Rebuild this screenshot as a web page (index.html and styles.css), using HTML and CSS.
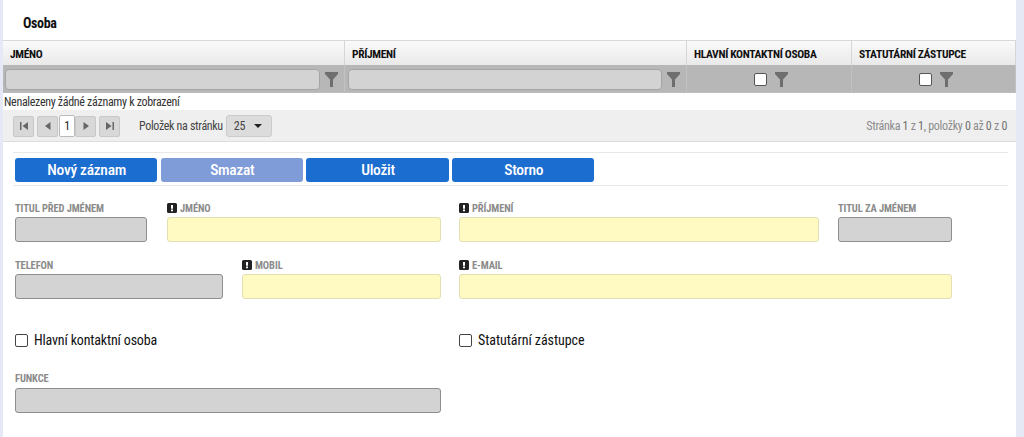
FILE: index.html
```html
<!DOCTYPE html>
<html lang="cs">
<head>
<meta charset="utf-8">
<title>Osoba</title>
<link rel="stylesheet" href="styles.css">
</head>
<body>
<svg class="defs" width="0" height="0" aria-hidden="true">
  <symbol id="funnel" viewBox="0 0 13 15"><path d="M0 0H13V2L8 7.5V15H5V7.5L0 2Z"/></symbol>
  <symbol id="warn" viewBox="0 0 10 10"><path fill-rule="evenodd" d="M1.5 0H8.5A1.5 1.5 0 0 1 10 1.5V8.500A1.500 1.500 0 0 1 8.500 10H1.500A1.500 1.500 0 0 1 0 8.500V1.500A1.500 1.500 0 0 1 1.500 0ZM4 2V5.700H6V2ZM4 6.500V8.300H6V6.500Z"/></symbol>
</svg>
<main class="page">
  <h1 class="title">Osoba</h1>
  <section class="grid">
    <div class="row head">
      <div class="cell c1">JMÉNO</div>
      <div class="cell c2">PŘÍJMENÍ</div>
      <div class="cell c3">HLAVNÍ KONTAKTNÍ OSOBA</div>
      <div class="cell c4">STATUTÁRNÍ ZÁSTUPCE</div>
    </div>
    <div class="row filter">
      <div class="fcell c1"><span class="finput"></span><svg class="funnel"><use href="#funnel"/></svg></div>
      <div class="fcell c2"><span class="finput"></span><svg class="funnel"><use href="#funnel"/></svg></div>
      <div class="fcell c3 center"><span class="fcheck"></span><svg class="funnel"><use href="#funnel"/></svg></div>
      <div class="fcell c4 center"><span class="fcheck"></span><svg class="funnel"><use href="#funnel"/></svg></div>
    </div>
    <div class="empty">Nenalezeny žádné záznamy k zobrazení</div>
    <div class="pager">
      <div class="nav">
        <span class="pbtn"><svg viewBox="0 0 8 8"><path d="M0 0H1.500V8H0ZM8 0V8L2.500 4Z"/></svg></span>
        <span class="pbtn gap"><svg viewBox="0 0 8 8"><path d="M6.500 0V8L1 4Z"/></svg></span>
        <span class="pnum">1</span>
        <span class="pbtn"><svg viewBox="0 0 8 8"><path d="M1.500 0V8L7 4Z"/></svg></span>
        <span class="pbtn gap"><svg viewBox="0 0 8 8"><path d="M8 0H6.500V8H8ZM0 0V8L5.500 4Z"/></svg></span>
      </div>
      <span class="plabel">Položek na stránku</span>
      <span class="psize">25<i class="caret"></i></span>
      <span class="pinfo">Stránka <b>1</b> z <b>1</b>, položky <b>0</b> až <b>0</b> z <b>0</b></span>
    </div>
  </section>
  <div class="toolbar">
    <button class="btn">Nový záznam</button>
    <button class="btn off">Smazat</button>
    <button class="btn">Uložit</button>
    <button class="btn">Storno</button>
  </div>
  <form class="form">
    <div class="frow r1">
      <div class="field"><label class="lab">TITUL PŘED JMÉNEM</label><span class="inp gray"></span></div>
      <div class="field"><label class="lab"><svg class="warn"><use href="#warn"/></svg>JMÉNO</label><span class="inp req"></span></div>
      <div class="field"><label class="lab"><svg class="warn"><use href="#warn"/></svg>PŘÍJMENÍ</label><span class="inp req"></span></div>
      <div class="field"><label class="lab">TITUL ZA JMÉNEM</label><span class="inp gray"></span></div>
    </div>
    <div class="frow r2">
      <div class="field"><label class="lab">TELEFON</label><span class="inp gray"></span></div>
      <div class="field"><label class="lab"><svg class="warn"><use href="#warn"/></svg>MOBIL</label><span class="inp req"></span></div>
      <div class="field"><label class="lab"><svg class="warn"><use href="#warn"/></svg>E-MAIL</label><span class="inp req"></span></div>
    </div>
    <div class="frow r3">
      <div class="chk"><span class="box"></span>Hlavní kontaktní osoba</div>
      <div class="chk chk-b"><span class="box"></span>Statutární zástupce</div>
    </div>
    <div class="frow r4">
      <div class="field"><label class="lab">FUNKCE</label><span class="inp gray"></span></div>
    </div>
  </form>
</main>
</body>
</html>
```
FILE: styles.css
```css
* { box-sizing: border-box; }
html, body { margin: 0; height: 437px; overflow: hidden; }
body { background: #e4e9f5; font-family: Roboto, "Liberation Sans", sans-serif; font-stretch: condensed; color: #111; }
.defs { position: absolute; }
.page { width: 1013px; height: 437px; margin-left: 3px; background: #fff; }
.title { margin: 0; height: 40px; padding: 14px 0 0 20px; font-size: 14px; line-height: 18px; font-weight: 700; letter-spacing: -0.35px; }
.row { display: grid; grid-template-columns: 342px 342px 165px 164px; }
.head { height: 25px; background: linear-gradient(#fafafa, #e9e9e9); border-top: 1px solid #d8d8d8; }
.cell { padding: 6px 0 0 7px; font-size: 11.500px; line-height: 14px; font-weight: 700; letter-spacing: -0.33px; border-right: 1px solid #d6d6d6; white-space: nowrap; }
.filter { height: 28px; background: #b7b7b7; border-bottom: 1px solid #bdbdbd; }
.fcell { display: flex; align-items: center; padding: 1px 6px 0 2px; border-right: 1px solid #c2c2c2; }
.c2 .finput { margin-left: 1px; }
.center { justify-content: center; padding: 1px 0 0 4px; }
.finput { flex: 1; height: 21px; background: #d3d3d3; border: 1px solid #a5a5a5; border-radius: 4px; }
.funnel { width: 13px; height: 15px; margin-left: 5px; fill: #6e6e6e; }
.fcheck { width: 13px; height: 13px; background: #fff; border: 1px solid #555; border-radius: 2px; margin-right: 3px; }
.empty { height: 17px; padding: 1px 0 0 1px; font-size: 12px; line-height: 16px; color: #333; letter-spacing: -0.32px; }
.pager { display: flex; align-items: center; height: 32px; padding: 1px 9px 0 10px; background: #efefef; border-bottom: 1px solid #ddd; font-size: 12px; color: #444; letter-spacing: -0.33px; }
.nav { display: flex; align-items: center; }
.pbtn { display: flex; align-items: center; justify-content: center; width: 21px; height: 21px; background: #d8d8d8; border: 1px solid #c8c8c8; border-radius: 2px; }
.pbtn svg { width: 8px; height: 8px; fill: #666; }
.gap { margin-left: 3px; }
.pnum { width: 16px; height: 22px; margin: 0; background: #fff; border: 1px solid #bbb; border-radius: 2px; text-align: center; font-size: 12px; line-height: 20px; color: #222; }
.nav .gap + .pnum { margin-left: 1px; }
.plabel { margin-left: 19px; }
.psize { position: relative; width: 46px; height: 22px; margin-left: 3px; padding-left: 7px; line-height: 21px; background: #dcdcdc; border: 1px solid #cbcbcb; border-radius: 3px; }
.caret { position: absolute; right: 9px; top: 8px; border: 4px solid transparent; border-top: 4px solid #222; border-bottom: 0; }
.pinfo { margin-left: auto; color: #8c8c8c; letter-spacing: -0.3px; }
.pinfo b { font-weight: 400; color: #6f6f6f; }
.toolbar { display: flex; gap: 3.400px; height: 34px; margin: 10px 8px 0 10px; padding: 5px 0 0 2px; border-top: 1px solid #e8e8e8; border-bottom: 1px solid #e8e8e8; }
.btn { width: 142.300px; height: 24px; padding: 0 0 0 1px; background: #1c6dd0; border: 0; border-radius: 3px; color: #fff; font: inherit; font-size: 15.500px; font-weight: 500; letter-spacing: -0.3px; }
.off { background: #7f9bd8; }
.form { padding: 0 0 0 12px; }
.frow { display: flex; }
.field { display: flex; flex-direction: column; }
.lab { display: flex; align-items: center; height: 14px; font-size: 10.500px; font-weight: 700; color: #8b8b8b; letter-spacing: -0.1px; white-space: nowrap; }
.warn { width: 10px; height: 10px; margin-right: 3px; fill: #222; }
.inp { height: 25px; margin-top: 2px; border-radius: 3px; }
.gray { background: #d3d3d3; border: 1px solid #8e8e8e; }
.req { background: #fff9c2; border: 1px solid #e3dfb4; }
.r1 { margin-top: 15px; }
.r1 .field:nth-child(1) { width: 132px; margin-right: 20px; }
.r1 .field:nth-child(2) { width: 274px; margin-right: 18px; }
.r1 .field:nth-child(3) { width: 360px; margin-right: 19px; }
.r1 .field:nth-child(4) { width: 114px; }
.r2 { margin-top: 16px; }
.r2 .field:nth-child(1) { width: 208px; margin-right: 19px; }
.r2 .field:nth-child(2) { width: 199px; margin-right: 18px; }
.r2 .field:nth-child(3) { width: 493px; }
.r3 { margin-top: 32px; height: 18px; }
.chk { display: flex; align-items: center; width: 444px; font-size: 14px; letter-spacing: -0.16px; color: #111; }
.chk-b { letter-spacing: -0.05px; }
.box { width: 13px; height: 13px; margin-right: 6px; border: 1px solid #444; border-radius: 2px; background: #fff; }
.r4 { margin-top: 22px; }
.r4 .field { width: 426px; }
.r4 .inp { margin-top: 3px; }
```
